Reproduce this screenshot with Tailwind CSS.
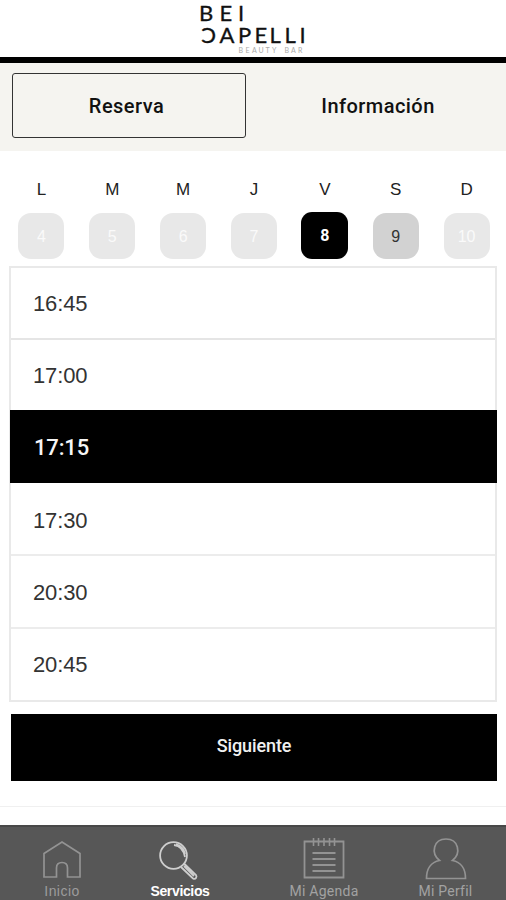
<!DOCTYPE html>
<html lang="es">
<head>
<meta charset="utf-8">
<title>Bei Capelli</title>
<script src="https://cdn.jsdelivr.net/npm/@tailwindcss/browser@4"></script>
</head>
<body class="bg-white">
<div class="flex h-[900px] w-[506px] flex-col overflow-hidden bg-white font-['Roboto',sans-serif] text-[#222]">
  <header class="flex h-[63px] shrink-0 justify-center border-b-[6px] border-black">
    <svg class="h-[57px] w-[120px]" viewBox="193 0 120 57" aria-label="Bei Capelli Beauty Bar">
      <g font-family="Lato, sans-serif" font-size="22" fill="#111" stroke="#111" stroke-width="0.350">
        <text y="20.500" x="199 219.500 238">BEI</text>
        <text transform="translate(216 42.500) scale(-1 1)">C</text>
        <text y="42.500" x="219.500 238 254.500 269.500 284.500 299.500">APELLI</text>
      </g>
      <text y="52.500" font-family="Lato, sans-serif" font-size="7" fill="#aaa" x="238.500 245.500 252 258.500 265.500 272 284.500 291 298">BEAUTYBAR</text>
    </svg>
  </header>

  <div class="flex h-[88px] shrink-0 bg-[#f5f4f0] pt-[10px] pl-3 pr-[10px] text-[20px] font-medium text-[#111]">
    <div class="flex h-[65px] w-[234px] items-center justify-center rounded-[3px] border border-[#333] pr-[5px] tracking-[0.45px]">Reserva</div>
    <div class="flex h-[65px] flex-1 items-center justify-center pl-[14px] tracking-[0.45px]">Información</div>
  </div>

  <div class="grid shrink-0 grid-cols-7 pr-[4px] pl-[6px] pt-[29px] text-center font-['Liberation_Sans',sans-serif] text-[17px] leading-5">
    <span>L</span><span>M</span><span>M</span><span>J</span><span>V</span><span>S</span><span>D</span>
  </div>
  <div class="grid h-[66px] shrink-0 grid-cols-7 items-start justify-items-center pr-[4px] pl-[6px] pt-[13px] font-['Liberation_Sans',sans-serif] text-[16px] text-[#fafafa]">
    <span class="flex size-[46px] items-center justify-center rounded-[13px] bg-[#e8e8e8] pt-[2px]">4</span>
    <span class="flex size-[46px] items-center justify-center rounded-[13px] bg-[#e8e8e8] pt-[2px]">5</span>
    <span class="flex size-[46px] items-center justify-center rounded-[13px] bg-[#e8e8e8] pt-[2px]">6</span>
    <span class="flex size-[46px] items-center justify-center rounded-[13px] bg-[#e8e8e8] pt-[2px]">7</span>
    <span class="-mt-px flex h-[47px] w-[47px] items-center justify-center rounded-[11px] bg-black font-['Roboto',sans-serif] font-bold text-white">8</span>
    <span class="flex size-[46px] items-center justify-center rounded-[13px] bg-[#d2d2d2] pt-[2px] text-[#333]">9</span>
    <span class="flex size-[46px] items-center justify-center rounded-[13px] bg-[#e8e8e8] pt-[2px]">10</span>
  </div>

  <ul class="mr-[9px] ml-[9px] flex h-[436px] shrink-0 flex-col border-2 border-[#e9e9e9] font-['Liberation_Sans',sans-serif] text-[22px] tracking-[-0.15px] text-[#333]">
    <li class="flex h-[72px] items-center border-b-2 border-[#e5e5e5] pl-[22px]">16:45</li>
    <li class="flex h-[70px] items-center pt-[1px] pl-[22px]">17:00</li>
    <li class="-mr-[2px] -ml-px flex h-[73px] items-center bg-black pt-[2px] pl-[24px] font-['Roboto',sans-serif] font-medium text-[#f5f5f5]">17:15</li>
    <li class="flex h-[73px] items-center border-b-2 border-[#ececec] pt-[3px] pl-[22px]">17:30</li>
    <li class="flex h-[73px] items-center border-b-2 border-[#ececec] pt-[2px] pl-[22px]">20:30</li>
    <li class="flex flex-1 items-center pl-[22px]">20:45</li>
  </ul>

  <button class="mt-[12px] mr-[9px] ml-[11px] h-[67px] shrink-0 bg-black pb-[4px] text-[18px] font-medium tracking-[-0.1px] text-[#f0f0f0]">Siguiente</button>

  <nav class="mt-[25px] flex h-[94px] shrink-0 flex-col border-t-[1px] border-[#f0f0f0] pt-[18px]">
    <div class="flex h-[75px] shrink-0 border-t-2 border-[#484848] bg-[#575757] pl-[1px] text-[#939393]">
      <a class="flex w-[122px] flex-col items-center">
        <svg class="mt-[11px] h-[44px] w-[44px]" viewBox="0 0 44 44" fill="none" stroke="currentColor" stroke-width="1.700">
          <path d="M4 39V15.500L22 4l18 11.500V39H27.500V30q0-5.500-5.500-5.500T16.500 30v9Z"/>
        </svg>
        <span class="mt-px font-['Liberation_Sans',sans-serif] text-[14px] leading-4 tracking-[0.45px] text-[#9c9c9c]">Inicio</span>
      </a>
      <a class="flex w-[114px] flex-col items-center text-[#cecece]">
        <svg class="mt-[11px] mr-[4px] h-[44px] w-[44px]" viewBox="0 0 44 44" fill="none" stroke="currentColor" stroke-width="1.800">
          <circle cx="17.500" cy="17.500" r="13.400"/>
          <path d="M18 7Q27 8 29 19M20 6Q28 9 29 16"/>
          <path d="m25 29 12 11.500q2 1 3-.5t0-3l-12-11.500M28 28l10 10"/>
        </svg>
        <span class="mt-px font-['Liberation_Sans',sans-serif] text-[14px] leading-4 font-bold tracking-[-0.35px] text-white">Servicios</span>
      </a>
      <a class="flex w-[174px] flex-col items-center">
        <svg class="mt-[9px] h-[46px] w-[46px]" viewBox="0 0 46 46" fill="none" stroke="currentColor" stroke-width="1.800">
          <path d="M3.500 5.500h39v36h-39Z"/>
          <path d="M12.500 2v8M17.500 2v8M23 2v8M28.500 2v8M33.500 2v8" stroke-width="1.600"/>
          <path d="M11.500 17h23M11.500 23h23M11.500 29h23M11.500 35h23" stroke-width="2"/>
        </svg>
        <span class="mt-px text-[14px] leading-4 tracking-[0.25px] text-[#a2a2a2]">Mi Agenda</span>
      </a>
      <a class="flex w-[69px] flex-col items-center">
        <svg class="mt-[9px] h-[46px] w-[46px]" viewBox="0 0 46 46" fill="none" stroke="currentColor" stroke-width="1.700">
          <path d="M3.500 42.500C3.500 33 8 26 16.500 24.500C7.500 17 10.500 3 23 3s15.500 14 6.500 21.500C38 26 42.500 33 42.500 42.500Z"/>
        </svg>
        <span class="mt-px text-[14px] leading-4 tracking-[0.25px] text-[#a2a2a2]">Mi Perfil</span>
      </a>
    </div>
  </nav>
</div>
</body>
</html>
